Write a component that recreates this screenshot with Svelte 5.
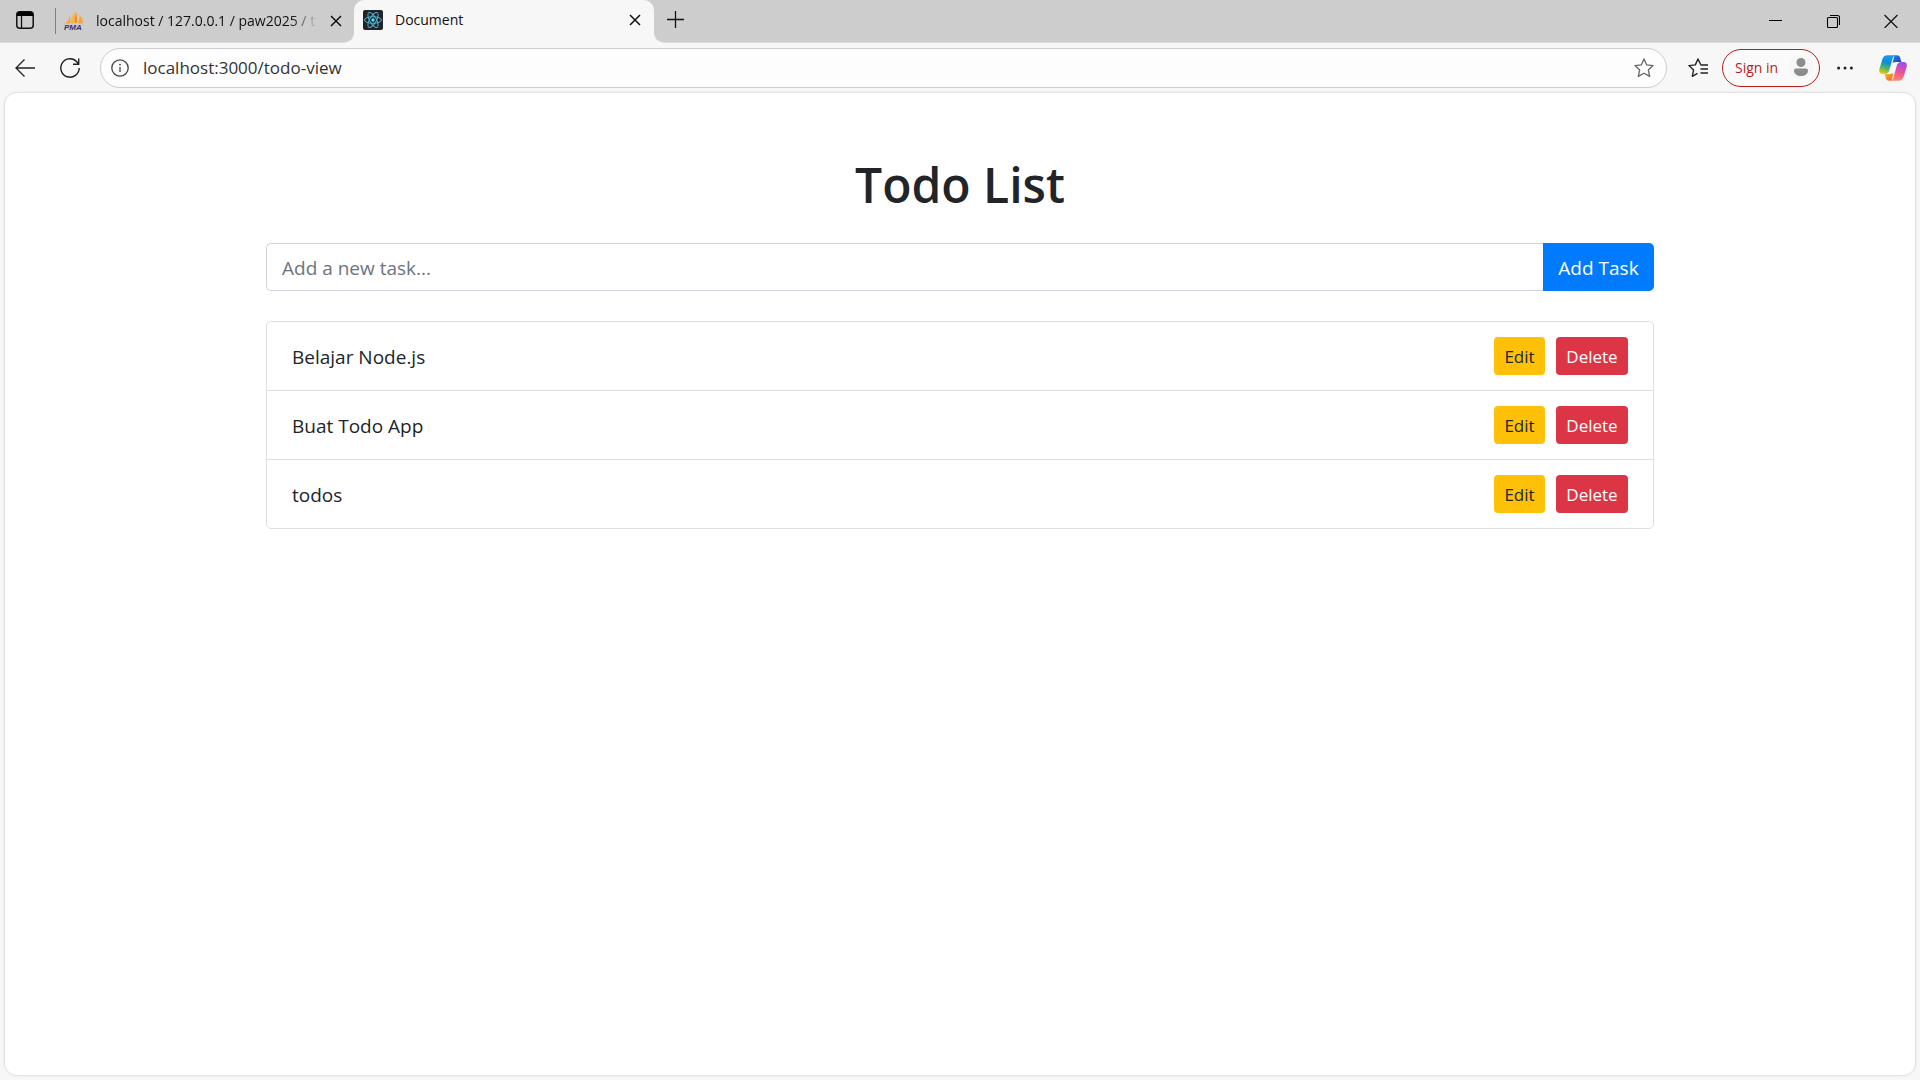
<script>
  let tasks = $state(['Belajar Node.js', 'Buat Todo App', 'todos']);
  let draft = $state('');
  let url = $state('localhost:3000/todo-view');

  function addTask(event) {
    event.preventDefault();
    if (draft.trim()) {
      tasks.push(draft.trim());
      draft = '';
    }
  }

  function editTask(index) {
    draft = tasks[index];
    tasks.splice(index, 1);
  }
</script>

<svelte:head><title>Document</title></svelte:head>

{#snippet cross(size)}
  <svg width={size} height={size} viewBox="0 0 12 12" fill="none" stroke="currentColor" stroke-width="1.5" aria-hidden="true">
    <path d="M1 1l10 10M11 1L1 11" />
  </svg>
{/snippet}

<div class="browser">
  <header class="strip">
    <div class="strip-left">
      <button class="plain tab-actions" aria-label="Tab actions">
        <svg width="18" height="18" viewBox="0 0 18 18" fill="none" aria-hidden="true">
          <rect x="0.8" y="0.8" width="16.4" height="16.4" rx="3" stroke="#111" stroke-width="1.5" />
          <path d="M.8 5V3.5A3 3 0 0 1 3.800.8h10.400a3 3 0 0 1 3 2.700V5z" fill="#000" />
          <path d="M5.500 5v12" stroke="#111" stroke-width="1.300" />
        </svg>
      </button>
      <span class="divider"></span>
      <div class="tab quiet">
        <svg width="20" height="20" viewBox="0 0 20 20" aria-hidden="true">
          <path d="M6 2.500C6 6.500 4 10.500 .8 12.800L6.500 12.300z" fill="#f9a53b" />
          <path d="M11.500 0c.8 4.500-.4 9-4 12.300l5.200-.3C13.500 8 13.300 3.500 11.500 0z" fill="#f08d1a" />
          <path d="M11 1C8 4 7 8 7 12h4z" fill="#fbb250" />
          <path d="M15.500 4c2.500 2.500 3.500 5.500 3.500 8.500l-5.500-.3c1.500-2.500 2.300-5.200 2-8.200z" fill="#f9a53b" />
          <text x="0" y="19" class="pma">PMA</text>
        </svg>
        <span class="tab-name faded">localhost / 127.0.0.1 / paw2025 / t</span>
        <button class="plain shut" aria-label="Close tab">{@render cross(12)}</button>
      </div>
    </div>

    <div class="tab-holder">
      <div class="tab active">
        <svg width="20" height="20" viewBox="0 0 20 20" aria-hidden="true">
          <rect width="20" height="20" rx="2" fill="#20232a" />
          <g fill="none" stroke="#4fb3cf" stroke-width="1">
            <ellipse cx="10" cy="10" rx="8.500" ry="3.300" />
            <ellipse cx="10" cy="10" rx="8.500" ry="3.300" transform="rotate(60 10 10)" />
            <ellipse cx="10" cy="10" rx="8.500" ry="3.300" transform="rotate(120 10 10)" />
          </g>
          <circle cx="10" cy="10" r="1.700" fill="#61dafb" />
        </svg>
        <span class="tab-name">Document</span>
        <button class="plain shut" aria-label="Close tab">{@render cross(12)}</button>
      </div>
    </div>

    <div class="strip-right">
      <button class="plain new-tab" aria-label="New tab">
        <svg width="18" height="18" viewBox="0 0 18 18" stroke="#111" stroke-width="1.300" aria-hidden="true">
          <path d="M8.500 0v17M0 8.500h17" />
        </svg>
      </button>
      <div class="window-buttons">
        <button class="plain" aria-label="Minimize">
          <svg width="14" height="14" viewBox="0 0 14 14" stroke="#000" aria-hidden="true"><path d="M1 6.500h13" /></svg>
        </button>
        <button class="plain" aria-label="Restore">
          <svg width="14" height="14" viewBox="0 0 14 14" fill="none" stroke="#000" stroke-width="1.100" aria-hidden="true">
            <rect x="1.500" y="3.500" width="10" height="10" rx="1" />
            <path d="M4 1.500h7.500A2 2 0 0 1 13.500 3.500V11" />
          </svg>
        </button>
        <button class="plain" aria-label="Close">
          <svg width="14" height="14" viewBox="0 0 14 14" stroke="#111" stroke-width="1.200" aria-hidden="true">
            <path d="M.5 1l13 13M13.500 1l-13 13" />
          </svg>
        </button>
      </div>
    </div>
  </header>

  <nav class="toolbar">
    <button class="plain back" aria-label="Back">
      <svg width="20" height="20" viewBox="0 0 20 20" fill="none" stroke="#222" stroke-width="1.300" aria-hidden="true">
        <path d="M9.500 1.500L1 10l8.500 8.500M1 10h19" />
      </svg>
    </button>
    <button class="plain reload" aria-label="Refresh">
      <svg width="20" height="20" viewBox="0 0 20 20" fill="none" stroke="#222" stroke-width="1.400" aria-hidden="true">
        <path d="M19.200 10A9.200 9.200 0 1 1 17 4l1.500 2M18.700.5v5.700h-5.700" />
      </svg>
    </button>
    <label class="address">
      <svg width="18" height="18" viewBox="0 0 18 18" fill="none" stroke="#444" stroke-width="1.300" aria-hidden="true">
        <circle cx="9" cy="9" r="8.200" />
        <path d="M9 8v5" />
        <circle cx="9" cy="5.600" r="0.900" fill="#444" stroke="none" />
      </svg>
      <input bind:value={url} aria-label="Address" />
      <button class="plain" aria-label="Add to favorites">
        <svg width="20" height="20" viewBox="0 0 20 20" fill="none" stroke="#666" stroke-width="1.300" stroke-linejoin="round" aria-hidden="true">
          <path d="M10 1l2.700 5.900 6.400.7-4.800 4.300 1.400 6.500L10 15.200l-5.700 3.200 1.400-6.500L.9 7.600l6.400-.7z" />
        </svg>
      </button>
    </label>
    <button class="plain favorites" aria-label="Favorites">
      <svg width="20" height="20" viewBox="0 0 20 20" fill="none" stroke="#222" stroke-width="1.400" stroke-linejoin="round" aria-hidden="true">
        <path d="M12.800 6.700L10 1 7.300 6.900.9 7.600l4.700 4.300-1.300 6.500 5.200-3" />
        <path d="M12.500 7H20M12.500 11H20M12.500 15H20" />
      </svg>
    </button>
    <button class="signin">
      Sign in
      <span class="avatar">
        <svg width="14" height="18" viewBox="0 0 14 18" fill="#8c8c8c" aria-hidden="true">
          <circle cx="7" cy="4.500" r="4.500" />
          <path d="M2 10.500h10a2 2 0 0 1 2 2C14 16 11 18 7 18s-7-2-7-5.500a2 2 0 0 1 2-2z" />
        </svg>
      </span>
    </button>
    <button class="plain more" aria-label="Settings and more">
      <svg width="16" height="4" viewBox="0 0 16 4" fill="#222" aria-hidden="true">
        <circle cx="1.600" cy="2" r="1.500" /><circle cx="8" cy="2" r="1.500" /><circle cx="14.400" cy="2" r="1.500" />
      </svg>
    </button>
    <button class="plain copilot" aria-label="Copilot">
      <svg width="28" height="26" viewBox="0 0 28 26" aria-hidden="true">
        <defs>
          <linearGradient id="cool" x1="0.600" y1="0" x2="0.300" y2="1">
            <stop offset="0" stop-color="#16a0f0" /><stop offset="0.400" stop-color="#1288d8" />
            <stop offset="0.700" stop-color="#4fb860" /><stop offset="1" stop-color="#f2c80c" />
          </linearGradient>
          <linearGradient id="deep" x1="0" y1="0" x2="1" y2="1">
            <stop offset="0" stop-color="#2a8af0" /><stop offset="1" stop-color="#1736b8" />
          </linearGradient>
          <linearGradient id="warm" x1="0.600" y1="0" x2="0.400" y2="1">
            <stop offset="0" stop-color="#9a4cf0" /><stop offset="0.500" stop-color="#e8509c" /><stop offset="1" stop-color="#ff8a68" />
          </linearGradient>
          <linearGradient id="ember" x1="0" y1="0" x2="1" y2="1">
            <stop offset="0" stop-color="#f5c518" /><stop offset="1" stop-color="#f0583c" />
          </linearGradient>
        </defs>
        <path d="M13.500 8l2-7.700h2.500c2 0 2.800 1 3.300 3L22.300 7h-3.800c-2.200 0-3.600.4-5 1z" fill="url(#deep)" />
        <path d="M14.500 18l-2 7.700H10c-2 0-2.800-1-3.300-3L5.700 19h3.800c2.200 0 3.600-.4 5-1z" fill="url(#ember)" />
        <path d="M8.500.3H17c-2 .4-3 1.700-3.700 4.200l-3 10.500c-.8 3-2.300 4-4.600 4H3.500C.6 19-.4 17 .4 14L3.300 4.500C4.200 1.700 5.800.3 8.500.3z" fill="url(#cool)" />
        <path d="M19.500 25.700H11c2-.4 3-1.700 3.700-4.200l3-10.500c.8-3 2.300-4 4.600-4h2.200c2.900 0 3.900 2 3.100 5l-2.900 9.500c-.9 2.800-2.500 4.200-5.200 4.200z" fill="url(#warm)" />
      </svg>
    </button>
  </nav>

  <main>
    <div class="container">
      <h1>Todo List</h1>
      <form onsubmit={addTask}>
        <input type="text" placeholder="Add a new task..." aria-label="New task" bind:value={draft} />
        <button type="submit">Add Task</button>
      </form>
      <ul>
        {#each tasks as task, i}
          <li>
            <span>{task}</span>
            <div class="actions">
              <button class="edit" onclick={() => editTask(i)}>Edit</button>
              <button class="delete" onclick={() => tasks.splice(i, 1)}>Delete</button>
            </div>
          </li>
        {/each}
      </ul>
    </div>
  </main>
</div>

<style>
  :global(body) {
    margin: 0;
    background: #f7f7f7;
  }

  .browser {
    box-sizing: border-box;
    min-height: 100vh;
    display: flex;
    flex-direction: column;
    font-family: 'Open Sans', 'Noto Sans', sans-serif;
    background: #f7f7f7;
  }

  .browser * {
    box-sizing: border-box;
  }

  button,
  input {
    font: inherit;
    margin: 0;
  }

  svg {
    display: block;
    flex: none;
  }

  .plain {
    display: flex;
    align-items: center;
    justify-content: center;
    flex: none;
    padding: 0;
    border: 0;
    background: none;
    color: #111;
  }

  /* Tab strip */
  .strip {
    display: flex;
    height: 43px;
    font-size: 14px;
    color: #111;
  }

  .strip-left,
  .strip-right {
    display: flex;
    align-items: center;
    background: #cdcdcd;
    border-bottom: 1px solid #dedede;
  }

  .strip-left {
    width: 354px;
    padding-left: 16px;
    border-bottom-right-radius: 10px;
  }

  .strip-right {
    flex: 1;
    justify-content: space-between;
    padding-left: 13px;
    border-bottom-left-radius: 10px;
  }

  .tab-actions {
    padding-bottom: 2px;
  }

  .divider {
    width: 1px;
    height: 26px;
    margin-left: 21px;
    background: #808080;
  }

  .tab {
    display: flex;
    align-items: center;
    height: 40px;
  }

  .quiet {
    flex: 1;
    min-width: 0;
    padding: 0 12px 0 8px;
    gap: 12px;
  }

  .tab-holder {
    width: 300px;
    background: linear-gradient(#cdcdcd 50%, #f7f7f7 50%);
  }

  .active {
    height: 100%;
    gap: 12px;
    padding: 0 13px 3px 9px;
    background: #f7f7f7;
    border-radius: 10px 10px 0 0;
  }

  .tab-name {
    flex: 1;
    min-width: 0;
    padding-bottom: 2px;
    overflow: hidden;
    white-space: nowrap;
  }

  .faded {
    -webkit-mask-image: linear-gradient(to right, #000 88%, transparent);
    mask-image: linear-gradient(to right, #000 88%, transparent);
  }

  .pma {
    font: italic 700 8px 'Liberation Sans', sans-serif;
    fill: #34336f;
  }

  .new-tab {
    padding-bottom: 3px;
  }

  .window-buttons {
    display: flex;
  }

  .window-buttons button {
    width: 58px;
    height: 42px;
  }

  /* Toolbar */
  .toolbar {
    display: flex;
    align-items: center;
    height: 50px;
    padding: 0 13px 0 15px;
  }

  .reload {
    margin-left: 25px;
  }

  .address {
    display: flex;
    align-items: center;
    flex: 1;
    height: 40px;
    margin-left: 20px;
    padding: 0 12px 0 10px;
    border: 1px solid #cccccc;
    border-radius: 20px;
    background: #fdfdfd;
  }

  .address input {
    flex: 1;
    min-width: 0;
    height: 30px;
    padding: 0 0 2px 14px;
    border: 0;
    outline: 0;
    background: none;
    font-size: 17px;
    color: #333;
  }

  .favorites {
    margin-left: 21px;
  }

  .signin {
    display: flex;
    align-items: center;
    justify-content: space-between;
    width: 98px;
    height: 38px;
    margin-left: 14px;
    padding: 0 4px 2px 12px;
    border: 1px solid #b91c1c;
    border-radius: 19px;
    background: #fafafa;
    color: #b91c1c;
    font-size: 14px;
    white-space: nowrap;
  }

  .avatar {
    display: flex;
    align-items: center;
    justify-content: center;
    width: 28px;
    height: 28px;
    border-radius: 50%;
    background: #f7f7f7;
    border: 1px solid #ffffff;
  }

  .more {
    margin-left: 17px;
  }

  .copilot {
    margin-left: 26px;
  }

  /* Page */
  main {
    flex: 1;
    margin: 0 5px 5px;
    padding: 60px 20px;
    border-radius: 12px;
    background: #ffffff;
    box-shadow: 0 0 3px rgba(0, 0, 0, 0.2);
    color: #212529;
    font-size: 19px;
  }

  .container {
    max-width: 1388px;
    margin: 0 auto;
  }

  h1 {
    margin: 0 0 26px;
    font-size: 48px;
    font-weight: 600;
    line-height: 64px;
    text-align: center;
  }

  form {
    display: flex;
    height: 48px;
    margin-bottom: 30px;
  }

  form input {
    flex: 1;
    min-width: 0;
    padding: 2px 15px 0;
    border: 1px solid #ced4da;
    border-right: 0;
    border-radius: 5px 0 0 5px;
    outline: 0;
    background: #ffffff;
    color: #495057;
  }

  form input::placeholder {
    color: #6c757d;
    opacity: 1;
  }

  form button {
    width: 111px;
    padding: 2px 0 0;
    border: 0;
    border-radius: 0 5px 5px 0;
    background: #007bff;
    color: #ffffff;
    white-space: nowrap;
  }

  ul {
    margin: 0;
    padding: 0;
    list-style: none;
    border: 1px solid #dfdfdf;
    border-radius: 5px;
  }

  li {
    display: flex;
    align-items: center;
    justify-content: space-between;
    padding: 15px 25px;
  }

  li span {
    padding-top: 2px;
  }

  li + li {
    border-top: 1px solid #dfdfdf;
  }

  .actions {
    display: flex;
    gap: 11px;
  }

  .actions button {
    height: 38px;
    padding: 0;
    border: 0;
    border-radius: 4px;
    font-size: 17px;
  }

  .actions .edit {
    width: 51px;
    background: #ffc107;
    color: #212529;
  }

  .actions .delete {
    width: 72px;
    background: #dc3545;
    color: #ffffff;
  }
</style>
